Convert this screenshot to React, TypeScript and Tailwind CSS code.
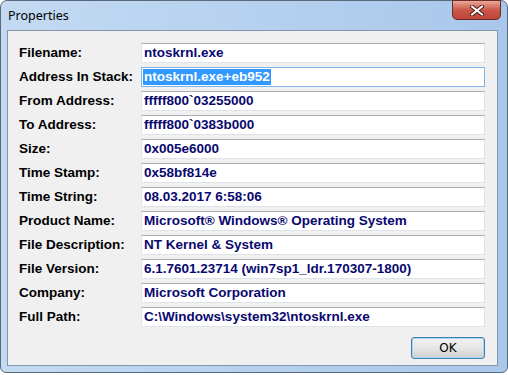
import React from "react";

const rows: [string, string][] = [
  ["Filename:", "ntoskrnl.exe"],
  ["Address In Stack:", "ntoskrnl.exe+eb952"],
  ["From Address:", "fffff800`03255000"],
  ["To Address:", "fffff800`0383b000"],
  ["Size:", "0x005e6000"],
  ["Time Stamp:", "0x58bf814e"],
  ["Time String:", "08.03.2017 6:58:06"],
  ["Product Name:", "Microsoft® Windows® Operating System"],
  ["File Description:", "NT Kernel & System"],
  ["File Version:", "6.1.7601.23714 (win7sp1_ldr.170307-1800)"],
  ["Company:", "Microsoft Corporation"],
  ["Full Path:", "C:\\Windows\\system32\\ntoskrnl.exe"],
];

export default function App() {
  return (
    <div className="w-[508px] h-[375px] bg-white overflow-hidden">
      <div className="w-[508px] h-[373px] rounded-t-[7px] rounded-b-[6px] border border-[#5a6a7c] bg-gradient-to-r from-[#c3daf2] via-[#b6d1ef] to-[#a9c7ea] flex flex-col">
        {/* title bar */}
        <div className="h-[29px] flex items-start relative">
          <span
            className="absolute left-[7px] top-[8px] text-[12.5px] text-black leading-[14px]"
            style={{ fontFamily: '"Noto Sans", "Open Sans", sans-serif' }}
          >
            Properties
          </span>
          <div className="absolute left-[451px] top-[-1px] w-[49px] h-[20px] rounded-b-[5px] border border-[#6b2a22] bg-gradient-to-b from-[#e9a899] via-[#c9574a] to-[#c0453a] flex items-center justify-center">
            <svg width="14" height="11" viewBox="0 0 14 11">
              <path d="M2 1.5 L12 9.5 M12 1.5 L2 9.5" stroke="#4a1a14" strokeWidth="4" strokeLinecap="round" />
              <path d="M2 1.5 L12 9.5 M12 1.5 L2 9.5" stroke="#ffffff" strokeWidth="2.2" strokeLinecap="round" />
            </svg>
          </div>
        </div>
        {/* client area */}
        <div className="ml-[6px] mr-[9px] mb-[6px] flex-1 border border-[#8596ab] bg-[#f0f0f0] pt-[12px] pl-[11px] pr-[12px] flex flex-col">
          <div className="flex flex-col gap-[4px]">
            {rows.map(([label, value], i) => (
              <div key={label} className="flex items-center h-[20px]">
                <div
                  className="w-[122px] text-[13.5px] font-bold text-black leading-[16px]"
                  style={{ fontFamily: '"Liberation Sans", Arial, sans-serif' }}
                >
                  {label}
                </div>
                <div
                  className={
                    "flex-1 h-[20px] border bg-white flex items-center pl-[1px] " +
                    (i === 1
                      ? "border-[#7fb4e6]"
                      : "border-[#dfe4ea] border-t-[#a9acb2]")
                  }
                >
                  <span
                    className={
                      "text-[13.5px] font-bold leading-[16px] px-[1px] " +
                      (i === 1 ? "bg-[#3399ff] text-white" : "text-[#080870]")
                    }
                    style={{ fontFamily: '"Liberation Sans", Arial, sans-serif' }}
                  >
                    {value}
                  </span>
                </div>
              </div>
            ))}
          </div>
          <div className="flex justify-end mt-[10px]">
            <div className="w-[74px] h-[22px] rounded-[3px] border border-[#3c7fb1] bg-gradient-to-b from-[#f2f2f2] via-[#e6e6e6] to-[#cfcfcf] flex items-center justify-center shadow-[inset_0_0_0_1px_#a7d9f5]">
              <span
                className="text-[12px] text-black leading-[14px]"
                style={{ fontFamily: '"DejaVu Sans", sans-serif' }}
              >
                OK
              </span>
            </div>
          </div>
        </div>
      </div>
    </div>
  );
}
